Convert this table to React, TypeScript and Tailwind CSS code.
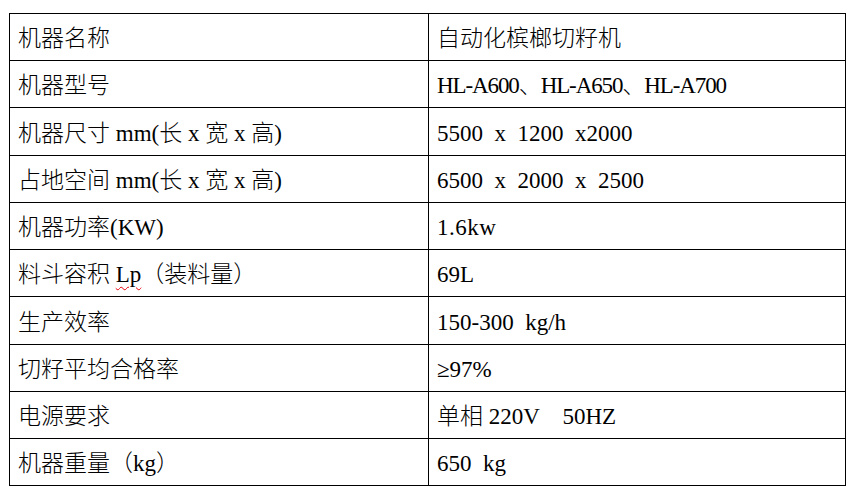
const rows: { label: React.ReactNode; value: string; h: string; cls?: string }[] = [
  { label: "机器名称", value: "自动化槟榔切籽机", h: "h-[47px]" },
  { label: "机器型号", value: "HL-A600、HL-A650、HL-A700", h: "h-[47px]", cls: "tracking-[-1.1px]" },
  { label: "机器尺寸 mm(长 x 宽 x 高)", value: "5500 x 1200 x2000", h: "h-[48px]" },
  { label: "占地空间 mm(长 x 宽 x 高)", value: "6500 x 2000 x 2500", h: "h-[47px]" },
  { label: "机器功率(KW)", value: "1.6kw", h: "h-[47px]", cls: "tracking-[0.5px]" },
  {
    label: (
      <>
        料斗容积 <span className="underline decoration-wavy decoration-red-600 decoration-1 underline-offset-4">Lp</span>（装料量）
      </>
    ),
    value: "69L",
    h: "h-[47px]",
  },
  { label: "生产效率", value: "150-300 kg/h", h: "h-[48px]" },
  { label: "切籽平均合格率", value: "≥97%", h: "h-[47px]" },
  { label: "电源要求", value: "单相 220V    50HZ", h: "h-[47px]", cls: "[word-spacing:0]" },
  { label: "机器重量（kg）", value: "650 kg", h: "h-[46px]" },
];

export default function App() {
  return (
    <main className="min-h-[490px] bg-white pl-[9px] pt-[13px]">
      <div
        className="w-[837px] border border-black text-[23px] leading-none font-light text-black"
        style={{ fontFamily: '"Liberation Serif", "Noto Sans CJK SC", serif' }}
      >
        {rows.map((row, i) => (
          <div
            key={i}
            className={`grid grid-cols-[419px_1fr] ${row.h} ${i < rows.length - 1 ? "border-b border-black" : ""}`}
          >
            <div className="flex items-center border-r border-black pl-[8px] pt-[3px] whitespace-pre">
              {row.label}
            </div>
            <div
              className={`flex items-center pl-[8px] pt-[3px] whitespace-pre [word-spacing:0.25em] ${row.cls ?? ""}`}
            >
              {row.value}
            </div>
          </div>
        ))}
      </div>
    </main>
  );
}
